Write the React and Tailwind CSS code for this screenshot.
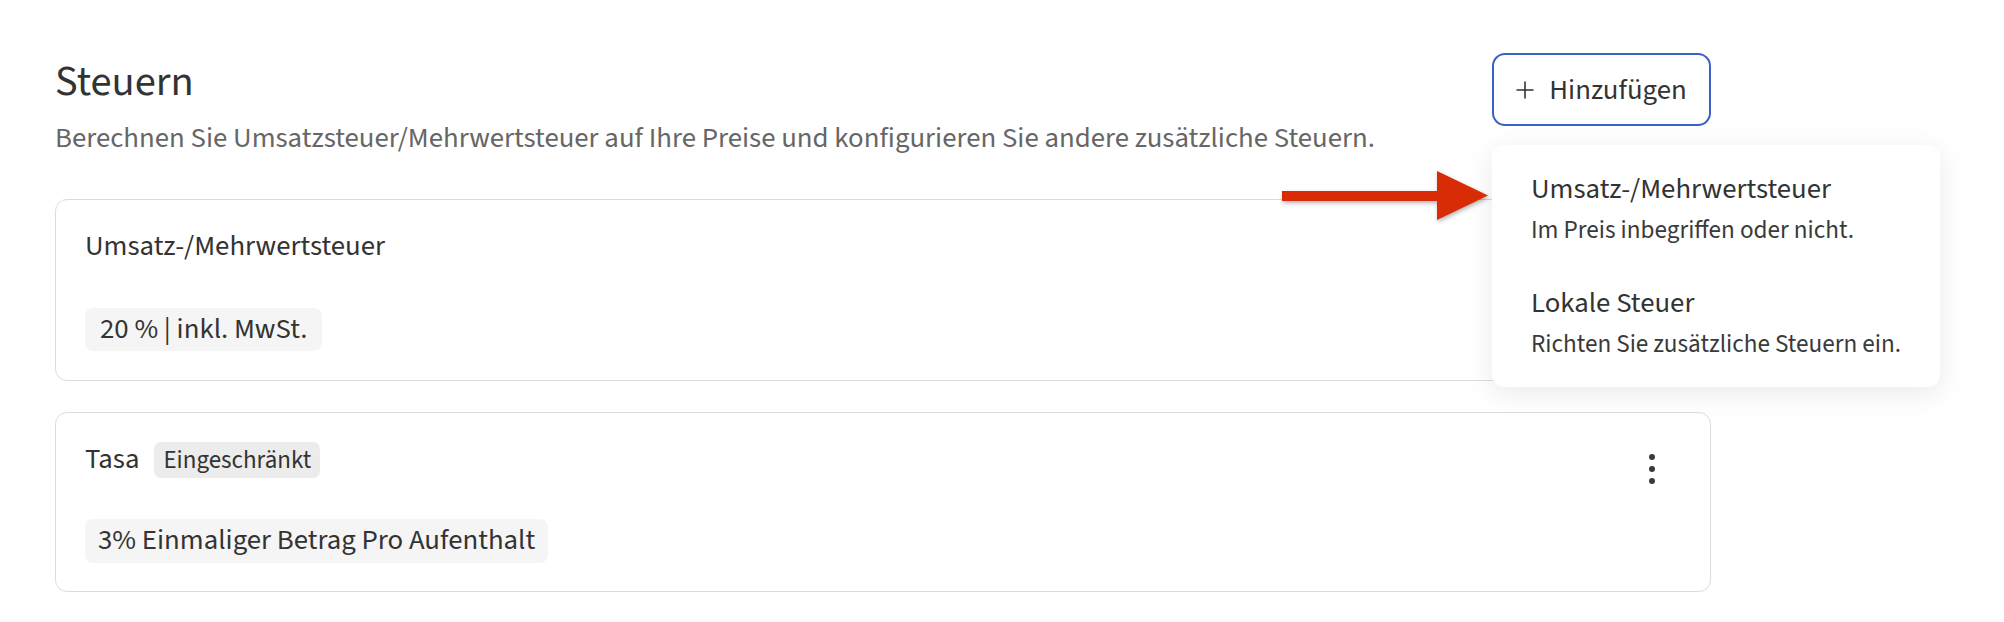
function KebabBtn() {
  return (
    <div className="mr-[17px] flex h-[40px] w-[24px] items-center justify-center">
      <svg width="24" height="40" viewBox="0 0 24 40" className="translate-y-[9px] overflow-visible">
        <circle cx="12" cy="8" r="3" fill="#3a3a3a" />
        <circle cx="12" cy="20" r="3" fill="#3a3a3a" />
        <circle cx="12" cy="32" r="3" fill="#3a3a3a" />
      </svg>
    </div>
  );
}

export default function App() {
  return (
    <div
      className="relative h-[622px] w-[2004px] overflow-hidden bg-white text-[#333]"
      style={{ fontFamily: "'Source Sans 3', 'Source Sans Pro', 'Liberation Sans', sans-serif" }}
    >
      <div className="ml-[55px] w-[1656px] pt-[53px]">
        {/* header */}
        <div className="flex items-start justify-between">
          <div className="flex flex-col">
            <h1 className="mt-[3px] text-[42.5px] font-normal leading-[52px] text-[#333]">Steuern</h1>
            <p className="mt-[11px] whitespace-nowrap text-[28.8px] leading-[40px] text-[#666]">
              Berechnen Sie Umsatzsteuer/Mehrwertsteuer auf Ihre Preise und konfigurieren Sie andere zusätzliche Steuern.
            </p>
          </div>
          <div className="relative z-10">
            <button className="flex h-[73px] w-[219px] items-center justify-center gap-[15px] rounded-[13px] border-2 border-[#3a62c6] bg-white pt-[3px] text-[28.8px] leading-[40px] text-[#333]">
              <svg width="18" height="18" viewBox="0 0 18 18" className="-mt-[3px]">
                <path d="M9 0.5V17.5M0.5 9H17.5" stroke="#333" strokeWidth="1.6" fill="none" />
              </svg>
              <span>Hinzufügen</span>
            </button>
            <div className="absolute left-0 top-full mt-[19px] flex w-[448px] flex-col gap-[40px] rounded-[12px] bg-white px-[39px] pb-[27px] pt-[27px] shadow-[0_6px_28px_rgba(0,0,0,0.09)]">
              <div className="flex flex-col">
                <div className="whitespace-nowrap text-[28.8px] leading-[36px] text-[#333]">Umsatz-/Mehrwertsteuer</div>
                <div className="mt-[6px] whitespace-nowrap text-[25.2px] leading-[32px] text-[#3a3a3a]">Im Preis inbegriffen oder nicht.</div>
              </div>
              <div className="flex flex-col">
                <div className="whitespace-nowrap text-[28.8px] leading-[36px] text-[#333]">Lokale Steuer</div>
                <div className="mt-[6px] whitespace-nowrap text-[25.2px] leading-[32px] text-[#3a3a3a]">Richten Sie zusätzliche Steuern ein.</div>
              </div>
            </div>
          </div>
        </div>

        {/* card 1 */}
        <div className="mt-[40px] rounded-[12px] border border-[#dcdcdc] pb-[29px] pl-[29px] pr-[29px] pt-[27px]">
          <div className="flex h-[40px] items-center justify-between">
            <span className="text-[28.8px] leading-[40px]">Umsatz-/Mehrwertsteuer</span>
            <KebabBtn />
          </div>
          <div className="mt-[41px] inline-flex h-[43px] items-center rounded-[8px] bg-[#f5f5f5] px-[15px] text-[28.8px] leading-[43px]">
            20 % | inkl. MwSt.
          </div>
        </div>

        {/* card 2 */}
        <div className="mt-[31px] rounded-[12px] border border-[#dcdcdc] pb-[28px] pl-[29px] pr-[29px] pt-[27px]">
          <div className="flex h-[40px] items-center justify-between">
            <div className="flex items-center gap-[15px]">
              <span className="text-[28.8px] leading-[40px]">Tasa</span>
              <span className="inline-flex h-[36px] items-center rounded-[7px] bg-[#ececec] px-[9px] text-[25px] leading-[36px]">
                Eingeschränkt
              </span>
            </div>
            <KebabBtn />
          </div>
          <div className="mt-[39px] inline-flex h-[44px] items-center rounded-[8px] bg-[#f5f5f5] px-[13px] text-[28.8px] leading-[44px]">
            3% Einmaliger Betrag Pro Aufenthalt
          </div>
        </div>
      </div>

      {/* annotation arrow */}
      <svg
        width="215"
        height="62"
        viewBox="0 0 215 62"
        className="absolute left-[1278px] top-[165px] z-20"
        style={{ filter: "drop-shadow(1px 2px 2px rgba(0,0,0,0.3))" }}
      >
        <rect x="4" y="26" width="157" height="10" fill="#d92b06" />
        <polygon points="159,6 210,30.5 159,55" fill="#d92b06" />
      </svg>
    </div>
  );
}
